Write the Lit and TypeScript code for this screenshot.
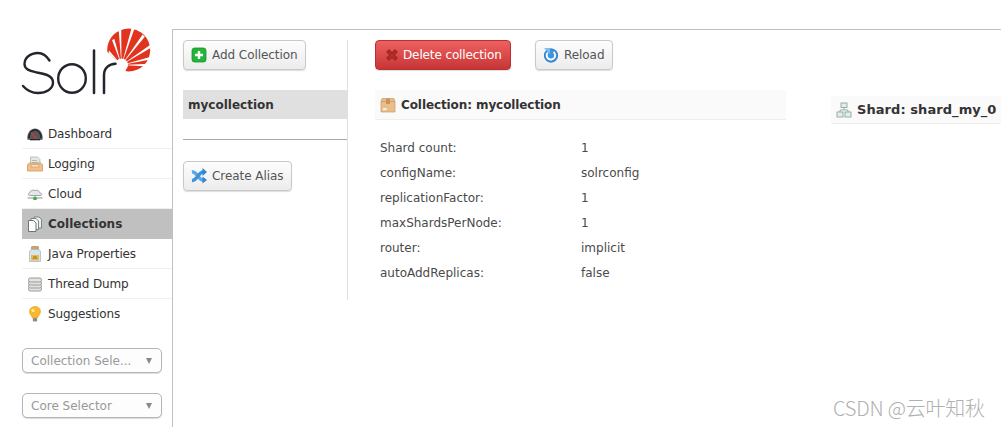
import { LitElement, html, css, svg } from "lit";
import { customElement } from "lit/decorators.js";

const icons: Record<string, any> = {
  dashboard: svg`<svg class="ic" viewBox="0 0 16 16"><path d="M0.3 13.5 C0 6 4 2.5 8 2.5 C12 2.5 16 6 15.7 13.5 L13 14 H3 Z" fill="#55585d"/><path d="M2 12 C2 7 5 4 8 4 C11 4 14 7 14 12" fill="none" stroke="#25272a" stroke-width="1.5"/><path d="M4 6.5 L10 13" stroke="#d9372b" stroke-width="1.3"/><path d="M3 13.7 H13" stroke="#222" stroke-width="1.2"/></svg>`,
  logging: svg`<svg class="ic" viewBox="0 0 16 16"><path d="M3.5 1 H10.5 L13 3.5 V10 H3.5 Z" fill="#dfeae6" stroke="#a9b5b0" stroke-width=".8"/><path d="M5 4.5 H10 M5 6.5 H11" stroke="#a8b8b2" stroke-width=".9"/><path d="M0.5 8.5 L2.5 7 H13.5 L15.5 8.5 V15 H0.5 Z" fill="#efc08c" stroke="#cf9a62" stroke-width=".8"/><path d="M4 8.5 H12 V11 H4 Z" fill="#fbe2c2" stroke="#cf9a62" stroke-width=".7"/></svg>`,
  cloud: svg`<svg class="ic" viewBox="0 0 16 16"><path d="M3 9.5 C1 9.5 .5 7.5 2.5 7 C3 4.5 6 3.5 8 4.5 C10 3.5 12.5 5 13 7 C15.5 7.3 15.5 9.5 13 9.5 Z" fill="#e4e7e8" stroke="#8d9499" stroke-width=".8"/><path d="M0.5 12 H15.5" stroke="#8d9094" stroke-width="1"/><path d="M8 9.5 V12" stroke="#888" stroke-width="1"/><rect x="6.3" y="11" width="3.4" height="3" fill="#3cb43c"/></svg>`,
  collections: svg`<svg class="ic" viewBox="0 0 16 16"><path d="M7 1 H12 L14.5 3.5 V12 H7 Z" fill="#eef1f1" stroke="#6f7a7c" stroke-width=".9"/><path d="M4 2.5 H9 L11.5 5 V13.5 H4 Z" fill="#f5f7f7" stroke="#6f7a7c" stroke-width=".9"/><path d="M1.5 4.5 H6.5 L9 7 V15.5 H1.5 Z" fill="#fff" stroke="#5f6a6c" stroke-width=".9"/></svg>`,
  java: svg`<svg class="ic" viewBox="0 0 16 16"><rect x="4.5" y="0.5" width="7" height="3" rx=".6" fill="#c8a765" stroke="#a5843f" stroke-width=".6"/><path d="M4 3.5 H12 L13.5 5.5 V15.5 H2.5 V5.5 Z" fill="#d5e4ee" stroke="#a7b9c6" stroke-width=".8"/><rect x="4" y="9" width="8" height="5.5" fill="#e9b956"/><path d="M6.5 10 H9.5 L10.5 13 H5.5 Z" fill="#c28f31"/></svg>`,
  thread: svg`<svg class="ic" viewBox="0 0 16 16"><g fill="#e3e4e1" stroke="#8f928c" stroke-width=".9"><rect x="1.5" y="11" width="13" height="4" rx="1.8"/><rect x="1.5" y="8" width="13" height="4" rx="1.8"/><rect x="1.5" y="5" width="13" height="4" rx="1.8"/><rect x="1.5" y="2" width="13" height="4" rx="1.8"/></g></svg>`,
  bulb: svg`<svg class="ic" viewBox="0 0 16 16"><path d="M8 .5 C4.5 .5 2.5 3 2.5 5.7 C2.5 8.5 5 9.5 5.5 12 H10.5 C11 9.5 13.5 8.5 13.5 5.7 C13.5 3 11.5 .5 8 .5 Z" fill="#f8b92e" stroke="#e19a17" stroke-width=".6"/><circle cx="6" cy="4.5" r="1.6" fill="#fde9a8"/><rect x="5.8" y="12" width="4.4" height="3.5" rx="1" fill="#8a8d8f"/></svg>`,
  add: svg`<svg class="ic" viewBox="0 0 16 16"><rect x="1" y="1" width="14" height="14" rx="2.5" fill="#22b53a" stroke="#16922a" stroke-width=".8"/><path d="M8 4 V12 M4 8 H12" stroke="#fff" stroke-width="2.4"/></svg>`,
  alias: svg`<svg class="ic" viewBox="0 0 16 16"><path d="M1 4 C6 3 8 13 12.5 12" fill="none" stroke="#5aa6e6" stroke-width="3.4"/><path d="M1 12.5 C6 13 8 3 12.5 4" fill="none" stroke="#3f92d8" stroke-width="3.4"/><path d="M11.5 0 L16 4 L11.5 8 Z M11.5 8.5 L16 12 L11.5 15.5 Z" fill="#2f86cf"/></svg>`,
  del: svg`<svg class="ic" viewBox="0 0 16 16"><path d="M3 5 L6 8 L3 11 L5 13 L8 10 L11 13 L13 11 L10 8 L13 5 L11 3 L8 6 L5 3 Z" fill="#b8302c" stroke="#9e2623" stroke-width="1.4" stroke-linejoin="round"/></svg>`,
  reload: svg`<svg class="ic" viewBox="0 0 16 16"><circle cx="8" cy="8.5" r="7" fill="#3d93dc"/><circle cx="8" cy="8.5" r="6.6" fill="none" stroke="#2a74b8" stroke-width=".6"/><path d="M4.8 5.5 A4.2 4.2 0 1 0 10.5 5" fill="none" stroke="#fff" stroke-width="1.8"/><path d="M1 1 H7 V7 Z" fill="#7fbdee"/></svg>`,
  box: svg`<svg class="ic" viewBox="0 0 16 16"><path d="M2 1.5 H14 L15 4.5 V15 H1 V4.5 Z" fill="#e9be8b" stroke="#c99c66" stroke-width=".7"/><path d="M1 4.5 H15" stroke="#c99c66" stroke-width=".8"/><rect x="6" y="1.5" width="4" height="5.5" fill="#c9935a"/><rect x="3" y="11" width="3.5" height="2.2" fill="#fbf0dc"/></svg>`,
  shard: svg`<svg class="ic" viewBox="0 0 16 16"><g fill="#e4ede9" stroke="#8fa8a0" stroke-width=".9"><rect x="5" y="1" width="6" height="4.5"/><rect x="1" y="10" width="6" height="5"/><rect x="9" y="10" width="6" height="5"/></g><path d="M8 5.5 V8 M4 10 V8 H12 V10" fill="none" stroke="#8fa8a0" stroke-width=".9"/></svg>`,
};

const logo = svg`<svg class="logo" viewBox="0 0 130 67" aria-hidden="true">
  <circle cx="106.7" cy="21" r="21.5" fill="#e0341f"/>
  <g fill="#fff">
    <polygon points="99.5,36 82,20 78,56 108,56 103.5,41"/>
    <circle cx="99.5" cy="36" r="6.5"/>
    <polygon points="99.5,36 87,21.6 86.6,24.2"/>
    <polygon points="99.5,36 90,11 92.4,10"/>
    <polygon points="99.5,36 96.6,0 99.2,0"/>
    <polygon points="99.5,36 109.6,-1 112.4,-0.2"/>
    <polygon points="99.5,36 120.6,5.6 122.8,7.8"/>
    <polygon points="99.5,36 128,16 129.4,18.6"/>
    <polygon points="99.5,36 129,27.8 129.6,30.2"/>
    <polygon points="99.5,36 127.4,34.8 127.4,37.4"/>
  </g>
  <g fill="none" stroke="#24262e" stroke-linecap="round">
    <path d="M27.5 31.5 C24 26 20 24 16 24 C8 24 2.5 29 2.5 35 C2.5 41 9 42 15 43.5 C24 45 31 47 31 53.5 C31 60 24 64 16 64 C10 64 4.5 61 1 57" stroke-width="2.4"/>
    <ellipse cx="50" cy="49.5" rx="13.8" ry="14.3" stroke-width="2.4"/>
    <path d="M72 21.5 V64" stroke-width="2.5"/>
    <path d="M82 64 V46 C82 39 87 35 93.5 34.8" stroke-width="2.5"/>
  </g>
</svg>`;

const nav: [string, string, boolean?][] = [
  ["dashboard", "Dashboard"],
  ["logging", "Logging"],
  ["cloud", "Cloud"],
  ["collections", "Collections", true],
  ["java", "Java Properties"],
  ["thread", "Thread Dump"],
  ["bulb", "Suggestions"],
];

const rows: [string, string][] = [
  ["Shard count:", "1"],
  ["configName:", "solrconfig"],
  ["replicationFactor:", "1"],
  ["maxShardsPerNode:", "1"],
  ["router:", "implicit"],
  ["autoAddReplicas:", "false"],
];

@customElement("app-root")
export class AppRoot extends LitElement {
  static styles = css`
    :host { display: block; position: relative; width: 1001px; height: 427px; overflow: hidden; background: #fff; color: #333; font-family: "DejaVu Sans", Verdana, sans-serif; font-size: 12px; }
    * { box-sizing: border-box; }
    .page { display: flex; height: 427px; padding-top: 29px; }
    .side { width: 172px; flex: none; padding-left: 22px; }
    .logo { display: block; width: 130px; height: 67px; overflow: visible; }
    .nav { margin-top: 23px; display: flex; flex-direction: column; }
    .nav-item { height: 30px; display: flex; align-items: center; gap: 5px; padding-left: 5px; border-bottom: 1px solid #f0f0f0; color: #333; letter-spacing: -.01em; }
    .nav-item:last-child { border-bottom: 0; }
    .nav-item.on { background: #c0c0c0; font-weight: bold; border-bottom-color: #c0c0c0; letter-spacing: 0; }
    .ic { width: 16px; height: 16px; flex: none; display: block; }
    .selects { display: flex; flex-direction: column; gap: 20px; margin-top: 19px; width: 140px; }
    .sel { height: 25px; border: 1px solid #b5b5b5; border-radius: 5px; color: #999; padding: 0 8px; display: flex; align-items: center; justify-content: space-between; box-shadow: 0 1px 1px #ddd; background: #fdfdfd; }
    .tri { width: 0; height: 0; border-left: 3.5px solid transparent; border-right: 3.5px solid transparent; border-top: 6px solid #888; margin-right: 1px; }
    .main { flex: 1; border-top: 1px solid #c0c0c0; border-left: 1px solid #c0c0c0; display: flex; align-items: flex-start; padding: 10px 0 0 10px; min-width: 0; }
    .list { width: 165px; height: 260px; flex: none; border-right: 1px solid #e0e0e0; }
    .btn { display: inline-flex; align-items: center; gap: 5px; height: 30px; padding: 0 7px; border: 1px solid #c9c9c9; border-radius: 4px; background: linear-gradient(#fdfdfd, #ececec); box-shadow: 0 1px 1px #ddd; color: #555; letter-spacing: -.005em; white-space: nowrap; }
    .btn.add { width: 123px; }
    .btn.alias { width: 109px; }
    .btn.del { width: 136px; background: linear-gradient(#ee6161, #c73535); border-color: #b93131; color: #fff; gap: 3px; padding-left: 8px; letter-spacing: -.01em; }
    .btn.rel { width: 78px; }
    .item { margin-top: 20px; height: 29px; background: #e0e0e0; font-weight: bold; font-size: 12px; line-height: 30px; padding-left: 5px; color: #333; }
    .sep { margin-top: 20px; height: 1px; background: #a8a8a8; margin-bottom: 21px; }
    .detail { width: 411px; flex: none; margin-left: 27px; }
    .actions { display: flex; gap: 24px; }
    .head { display: flex; align-items: center; gap: 5px; background: #fafafa; border-bottom: 1px solid #eee; font-weight: bold; font-size: 12px; color: #333; padding-left: 5px; white-space: nowrap; letter-spacing: -.008em; }
    .head.c { height: 30px; margin-top: 20px; }
    .table { display: grid; grid-template-columns: 201px 1fr; grid-auto-rows: 25px; margin: 15px 0 0 5px; align-items: center; color: #4a4a4a; }
    .shard { margin: 56px 0 0 45px; width: 170px; flex: none; }
    .head.s { height: 28px; padding-left: 5px; gap: 5px; font-size: 13px; letter-spacing: .005em; }
    .mark { position: absolute; left: 833px; top: 395px; font-family: "Noto Sans CJK SC", "Noto Sans", sans-serif; font-size: 20px; font-weight: 300; color: #b0b0b0; line-height: 26px; white-space: nowrap; letter-spacing: -.01em; }
  `;

  render() {
    return html`
      <div class="page">
        <aside class="side">
          ${logo}
          <nav class="nav">
            ${nav.map(([i, t, on]) => html`<div class="nav-item ${on ? "on" : ""}">${icons[i]}<span>${t}</span></div>`)}
          </nav>
          <div class="selects">
            <div class="sel"><span>Collection Sele...</span><i class="tri"></i></div>
            <div class="sel"><span>Core Selector</span><i class="tri"></i></div>
          </div>
        </aside>
        <main class="main">
          <section class="list">
            <div class="btn add">${icons.add}<span>Add Collection</span></div>
            <div class="item">mycollection</div>
            <div class="sep"></div>
            <div class="btn alias">${icons.alias}<span>Create Alias</span></div>
          </section>
          <section class="detail">
            <div class="actions">
              <div class="btn del">${icons.del}<span>Delete collection</span></div>
              <div class="btn rel">${icons.reload}<span>Reload</span></div>
            </div>
            <div class="head c">${icons.box}<span>Collection: mycollection</span></div>
            <div class="table">
              ${rows.map(([k, v]) => html`<span>${k}</span><span>${v}</span>`)}
            </div>
          </section>
          <section class="shard">
            <div class="head s">${icons.shard}<span>Shard: shard_my_0</span></div>
          </section>
        </main>
      </div>
      <div class="mark">CSDN @云叶知秋</div>
    `;
  }
}
